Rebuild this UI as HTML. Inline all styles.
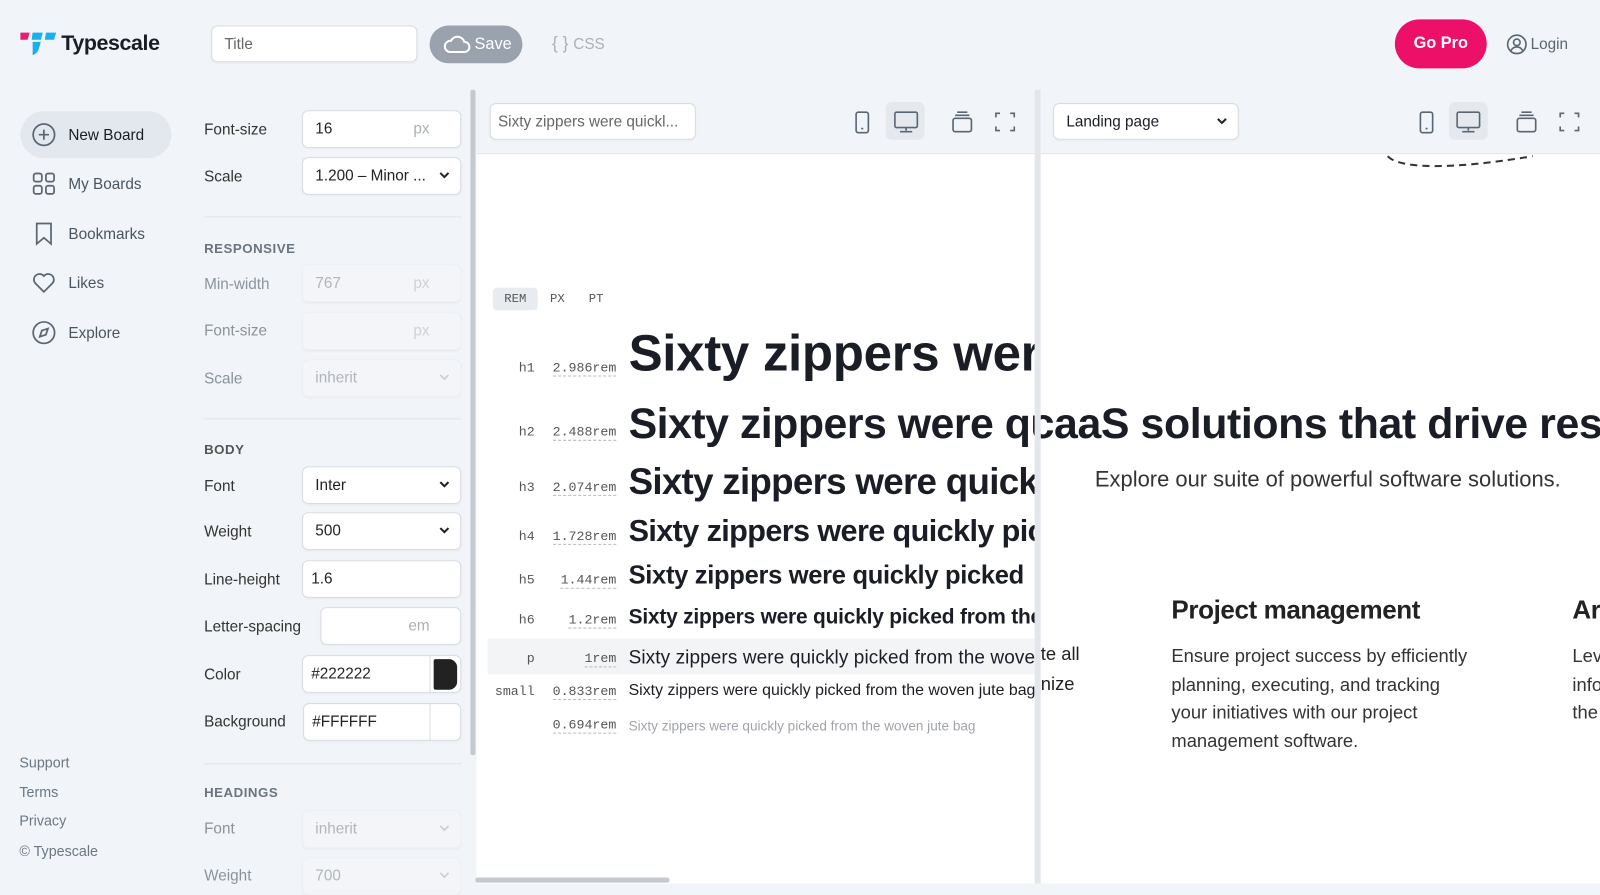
<!DOCTYPE html>
<html><head><meta charset="utf-8"><style>
*{box-sizing:border-box;margin:0;padding:0}
html,body{width:1600px;height:889px;overflow:hidden;background:#f1f4f8}
#w{position:absolute;left:0;top:0;width:1568px;height:871px;transform:scale(1.0204);transform-origin:0 0;font-family:"Liberation Sans",sans-serif;color:#222}
.a{position:absolute}
.nav{position:absolute;left:67px;font-size:15px;color:#4a5562}
.ic{position:absolute;left:31px}
.lab{position:absolute;left:200px;font-size:15px;color:#333}
.lab.d{color:#8a939c}
.in{position:absolute;background:#fff;border:1px solid #d8dde3;border-radius:6px;height:37px;font-size:15px;padding:0 0 0 12px;line-height:35px;color:#222;box-shadow:0 1px 2px rgba(0,0,0,.04)}
.in.d{background:#f3f5f8;border-color:#eef0f3;color:#b0b6bd}
.unit{position:absolute;right:30px;top:0;color:#aab1b8}
.chev{position:absolute;right:10px;top:13px}
.sec{position:absolute;left:200px;font-size:13px;font-weight:bold;letter-spacing:.5px;color:#555}
.hr{position:absolute;left:200px;width:252px;height:1px;background:#e1e5ea}
.tag{position:absolute;font-family:"Liberation Mono",monospace;font-size:13px;color:#555;text-align:right}
.tg{left:478px;width:46px}
.vl{left:530px;width:74px}
.vl span{border-bottom:1px dashed #bbb}
.s{position:absolute;left:616px;white-space:nowrap;font-weight:bold;color:#1a1d26;letter-spacing:-.5px}
.foot{position:absolute;left:19px;font-size:14px;color:#6b7785}
</style></head><body><div id="w">
<!-- header -->
<svg class="a" style="left:18px;top:30px" width="38" height="26" viewBox="0 0 38 26"><path d="M2 2h9l-2 7H2z" fill="#ec1a73"/><path d="M14 2h10l-2 7h-9z" fill="#1ab0ec"/><path d="M27 2h10l-2 7h-9z" fill="#1ab0ec"/><path d="M14 11h8l-2 7c-1 3-3 5-6 6z" fill="#1ab0ec"/></svg>
<div class="a" style="left:60px;top:31px;font-size:21px;font-weight:bold;color:#1a1d26;letter-spacing:-.4px">Typescale</div>
<div class="in" style="left:207px;top:25px;width:202px;height:36px;color:#666">Title</div>
<div class="a" style="left:421px;top:25px;width:91px;height:37px;border-radius:19px;background:#9aa3ad;color:#fff;font-size:16px;line-height:37px;padding-left:44px">Save</div>
<svg class="a" style="left:434px;top:33px" width="28" height="20" viewBox="0 0 28 20"><path d="M7 18h14a5 5 0 0 0 0-10 7 7 0 0 0-13-1A5.5 5.5 0 0 0 7 18z" fill="none" stroke="#fff" stroke-width="2"/></svg>
<div class="a" style="left:541px;top:33px;font-size:17px;color:#aab1b8">{ } <span style="font-size:15px">CSS</span></div>
<div class="a" style="left:1367px;top:19px;width:90px;height:48px;border-radius:24px;background:#ec1068;color:#fff;font-weight:bold;font-size:16px;line-height:48px;text-align:center">Go Pro</div>
<svg class="a" style="left:1476px;top:33px" width="21" height="21" viewBox="0 0 21 21" fill="none" stroke="#5b6673" stroke-width="1.6"><circle cx="10.5" cy="10.5" r="9"/><circle cx="10.5" cy="8.5" r="3.2"/><path d="M4.5 17c1.5-3 3.5-4 6-4s4.5 1 6 4"/></svg>
<div class="a" style="left:1500px;top:35px;font-size:15px;color:#5b6673">Login</div>
<!-- nav -->
<div class="a" style="left:20px;top:109px;width:148px;height:46px;border-radius:23px;background:#e3e8ef"></div>
<svg class="ic" style="top:120px" width="24" height="24" viewBox="0 0 24 24" fill="none" stroke="#5b6673" stroke-width="1.7"><circle cx="12" cy="12" r="10.5"/><path d="M12 7v10M7 12h10"/></svg>
<div class="nav" style="top:124px;color:#1a1d26">New Board</div>
<svg class="ic" style="top:168px" width="24" height="24" viewBox="0 0 24 24" fill="none" stroke="#5b6673" stroke-width="1.7"><rect x="2" y="2" width="8" height="8" rx="2"/><rect x="14" y="2" width="8" height="8" rx="2"/><rect x="2" y="14" width="8" height="8" rx="2"/><rect x="14" y="14" width="8" height="8" rx="2"/></svg>
<div class="nav" style="top:172px">My Boards</div>
<svg class="ic" style="top:217px" width="24" height="24" viewBox="0 0 24 24" fill="none" stroke="#5b6673" stroke-width="1.7"><path d="M5 2h14v20l-7-6-7 6z"/></svg>
<div class="nav" style="top:221px">Bookmarks</div>
<svg class="ic" style="top:265px" width="24" height="24" viewBox="0 0 24 24" fill="none" stroke="#5b6673" stroke-width="1.7"><path d="M12 21 3.5 12.5A5 5 0 0 1 12 5.5a5 5 0 0 1 8.5 7z"/></svg>
<div class="nav" style="top:269px">Likes</div>
<svg class="ic" style="top:314px" width="24" height="24" viewBox="0 0 24 24" fill="none" stroke="#5b6673" stroke-width="1.7"><circle cx="12" cy="12" r="10.5"/><path d="M16 8l-2 6-6 2 2-6z"/></svg>
<div class="nav" style="top:318px">Explore</div>
<div class="foot" style="top:739px">Support</div>
<div class="foot" style="top:768px">Terms</div>
<div class="foot" style="top:796px">Privacy</div>
<div class="foot" style="top:826px">© Typescale</div>
<!-- settings -->
<div class="lab" style="top:119px">Font-size</div>
<div class="in" style="left:296px;top:108px;width:156px">16<span class="unit">px</span></div>
<div class="lab" style="top:165px">Scale</div>
<div class="in" style="left:296px;top:154px;width:156px">1.200 – Minor ...<svg class="chev" width="11" height="8" viewBox="0 0 11 8"><path d="M1.5 1.5l4 4 4-4" fill="none" stroke="#222" stroke-width="2"/></svg></div>
<div class="hr" style="top:212px"></div>
<div class="sec" style="top:236px;color:#6b7580">RESPONSIVE</div>
<div class="lab d" style="top:270px">Min-width</div>
<div class="in d" style="left:296px;top:259px;width:156px">767<span class="unit" style="color:#cdd2d7">px</span></div>
<div class="lab d" style="top:316px">Font-size</div>
<div class="in d" style="left:296px;top:306px;width:156px"><span class="unit" style="color:#cdd2d7">px</span></div>
<div class="lab d" style="top:363px">Scale</div>
<div class="in d" style="left:296px;top:352px;width:156px">inherit<svg class="chev" width="11" height="8" viewBox="0 0 11 8"><path d="M1.5 1.5l4 4 4-4" fill="none" stroke="#ccc" stroke-width="1.6"/></svg></div>
<div class="hr" style="top:410px"></div>
<div class="sec" style="top:433px">BODY</div>
<div class="lab" style="top:468px">Font</div>
<div class="in" style="left:296px;top:457px;width:156px">Inter<svg class="chev" width="11" height="8" viewBox="0 0 11 8"><path d="M1.5 1.5l4 4 4-4" fill="none" stroke="#222" stroke-width="2"/></svg></div>
<div class="lab" style="top:513px">Weight</div>
<div class="in" style="left:296px;top:502px;width:156px">500<svg class="chev" width="11" height="8" viewBox="0 0 11 8"><path d="M1.5 1.5l4 4 4-4" fill="none" stroke="#222" stroke-width="2"/></svg></div>
<div class="lab" style="top:560px">Line-height</div>
<div class="in" style="left:296px;top:549px;width:156px;padding-left:8px">1.6</div>
<div class="lab" style="top:606px">Letter-spacing</div>
<div class="in" style="left:314px;top:595px;width:138px"><span class="unit">em</span></div>
<div class="lab" style="top:653px">Color</div>
<div class="in" style="left:296px;top:642px;width:156px;padding-left:8px">#222222<div class="a" style="left:124px;top:-1px;width:1px;height:37px;background:#d8dde3"></div><div class="a" style="left:128px;top:3px;width:23px;height:30px;background:#222;border-radius:2px 8px 8px 2px"></div></div>
<div class="lab" style="top:699px">Background</div>
<div class="in" style="left:297px;top:689px;width:155px;padding-left:8px">#FFFFFF<div class="a" style="left:123px;top:-1px;width:1px;height:37px;background:#d8dde3"></div></div>
<div class="hr" style="top:748px"></div>
<div class="sec" style="top:769px;color:#6b7580">HEADINGS</div>
<div class="lab d" style="top:804px">Font</div>
<div class="in d" style="left:296px;top:794px;width:156px">inherit<svg class="chev" width="11" height="8" viewBox="0 0 11 8"><path d="M1.5 1.5l4 4 4-4" fill="none" stroke="#ccc" stroke-width="1.6"/></svg></div>
<div class="lab d" style="top:850px">Weight</div>
<div class="in d" style="left:296px;top:840px;width:156px">700<svg class="chev" width="11" height="8" viewBox="0 0 11 8"><path d="M1.5 1.5l4 4 4-4" fill="none" stroke="#ccc" stroke-width="1.6"/></svg></div>
<div class="a" style="left:461px;top:88px;width:5px;height:652px;background:#c5cad0;border-radius:2px"></div>
<!-- left preview -->
<div class="a" style="left:467px;top:88px;width:547px;height:778px;background:#fff;overflow:hidden">
 <div class="a" style="left:0;top:0;width:547px;height:63px;background:#f1f4f8;border-bottom:1px solid #e3e7ec"></div>
</div>
<div class="in" style="left:480px;top:101px;width:202px;height:36px;color:#666;padding-left:7px">Sixty zippers were quickl...</div>
<div class="a" style="left:868px;top:100px;width:38px;height:37px;background:#e5e9ee;border-radius:6px"></div>
<svg class="a" style="left:835px;top:106px" width="160" height="26" viewBox="0 0 160 26" fill="none" stroke="#5b6673" stroke-width="1.6"><rect x="4" y="4" width="12" height="20" rx="2"/><path d="M9 20h2"/><rect x="42" y="4" width="22" height="15" rx="1.5"/><path d="M53 19v3M47 23h12"/><rect x="99" y="10" width="18" height="13" rx="2"/><path d="M101 7h14M103 4h10"/><path d="M141 9V5h4M155 5h4v4M159 18v4h-4M145 22h-4v-4"/></svg>
<div class="a" style="left:483px;top:282px;width:44px;height:22px;background:#e8ebef;border-radius:4px"></div>
<div class="a" style="left:483px;top:286px;font-family:'Liberation Mono',monospace;font-size:12px;color:#555;width:44px;text-align:center">REM</div>
<div class="a" style="left:539px;top:286px;font-family:'Liberation Mono',monospace;font-size:12px;color:#555">PX</div>
<div class="a" style="left:577px;top:286px;font-family:'Liberation Mono',monospace;font-size:12px;color:#555">PT</div>
<div class="a" style="left:478px;top:626px;width:536px;height:35px;background:#f3f4f6"></div>
<div class="a" style="left:467px;top:88px;width:547px;height:778px;overflow:hidden">
 <div class="s" style="left:149px;top:229px;font-size:50px;letter-spacing:-.3px">Sixty zippers were quickly</div>
 <div class="s" style="left:149px;top:303px;font-size:42px;letter-spacing:-.5px">Sixty zippers were quickly picked</div>
 <div class="s" style="left:149px;top:363px;font-size:36px;letter-spacing:-.7px">Sixty zippers were quickly picked</div>
 <div class="s" style="left:149px;top:416px;font-size:30px;letter-spacing:-.6px">Sixty zippers were quickly picked from</div>
 <div class="s" style="left:149px;top:462px;font-size:25px;letter-spacing:-.3px">Sixty zippers were quickly picked</div>
 <div class="s" style="left:149px;top:505px;font-size:20.5px;letter-spacing:-.2px">Sixty zippers were quickly picked from the woven</div>
 <div class="s" style="left:149px;top:545px;font-size:18.6px;font-weight:normal;letter-spacing:.1px">Sixty zippers were quickly picked from the woven jute bag</div>
 <div class="s" style="left:149px;top:580px;font-size:15.6px;font-weight:normal;letter-spacing:0">Sixty zippers were quickly picked from the woven jute bag</div>
 <div class="s" style="left:149px;top:616px;font-size:13.3px;font-weight:normal;letter-spacing:0;color:#a0a4aa">Sixty zippers were quickly picked from the woven jute bag</div>
</div>
<div class="tag tg" style="top:353px">h1</div><div class="tag vl" style="top:353px"><span>2.986rem</span></div>
<div class="tag tg" style="top:416px">h2</div><div class="tag vl" style="top:416px"><span>2.488rem</span></div>
<div class="tag tg" style="top:470px">h3</div><div class="tag vl" style="top:470px"><span>2.074rem</span></div>
<div class="tag tg" style="top:518px">h4</div><div class="tag vl" style="top:518px"><span>1.728rem</span></div>
<div class="tag tg" style="top:561px">h5</div><div class="tag vl" style="top:561px"><span>1.44rem</span></div>
<div class="tag tg" style="top:600px">h6</div><div class="tag vl" style="top:600px"><span>1.2rem</span></div>
<div class="tag tg" style="top:638px">p</div><div class="tag vl" style="top:638px"><span>1rem</span></div>
<div class="tag tg" style="top:670px;left:474px;width:50px">small</div><div class="tag vl" style="top:670px"><span>0.833rem</span></div>
<div class="tag vl" style="top:703px"><span>0.694rem</span></div>
<div class="a" style="left:466px;top:860px;width:190px;height:5px;background:#c5cad0;border-radius:2px"></div>
<div class="a" style="left:1014px;top:88px;width:6px;height:778px;background:#e3e7ec"></div>
<!-- right preview -->
<div class="a" style="left:1020px;top:88px;width:548px;height:778px;background:#fff;overflow:hidden">
 <div class="a" style="left:0;top:0;width:548px;height:63px;background:#f1f4f8;border-bottom:1px solid #e3e7ec"></div>
 <svg class="a" style="left:336px;top:62px" width="160" height="20" viewBox="0 0 160 20"><path d="M4 3c10 12 60 14 142 0" fill="none" stroke="#333" stroke-width="2" stroke-dasharray="7 5"/></svg>
 <div class="s" style="left:-10px;top:303px;font-size:42px;letter-spacing:-.4px">caaS solutions that drive results</div>
 <div class="a" style="left:53px;top:370px;font-size:21.5px;color:#333;white-space:nowrap">Explore our suite of powerful software solutions.</div>
 <div class="s" style="left:128px;top:496px;font-size:25.5px;letter-spacing:-.4px;color:#222">Project management</div>
 <div class="s" style="left:521px;top:496px;font-size:25.5px;color:#222">Ar</div>
 <div class="a" style="left:128px;top:542px;font-size:18px;line-height:27.7px;color:#333;width:300px">Ensure project success by efficiently planning, executing, and tracking your initiatives with our project management software.</div>
 <div class="a" style="left:521px;top:542px;font-size:18px;line-height:27.7px;color:#333">Lev<br>info<br>the</div>
 <div class="a" style="left:0;top:543px;font-size:18px;color:#222">te all</div>
 <div class="a" style="left:0;top:572px;font-size:18px;color:#222">nize</div>
</div>
<div class="in" style="left:1032px;top:101px;width:182px;height:36px;font-size:15px;color:#1a1d26">Landing page<svg class="chev" width="11" height="8" viewBox="0 0 11 8"><path d="M1.5 1.5l4 4 4-4" fill="none" stroke="#222" stroke-width="2"/></svg></div>
<div class="a" style="left:1420px;top:100px;width:38px;height:37px;background:#e5e9ee;border-radius:6px"></div>
<svg class="a" style="left:1388px;top:106px" width="160" height="26" viewBox="0 0 160 26" fill="none" stroke="#5b6673" stroke-width="1.6"><rect x="4" y="4" width="12" height="20" rx="2"/><path d="M9 20h2"/><rect x="40" y="4" width="22" height="15" rx="1.5"/><path d="M51 19v3M45 23h12"/><rect x="99" y="10" width="18" height="13" rx="2"/><path d="M101 7h14M103 4h10"/><path d="M141 9V5h4M155 5h4v4M159 18v4h-4M145 22h-4v-4"/></svg>
</div>
</body></html>
